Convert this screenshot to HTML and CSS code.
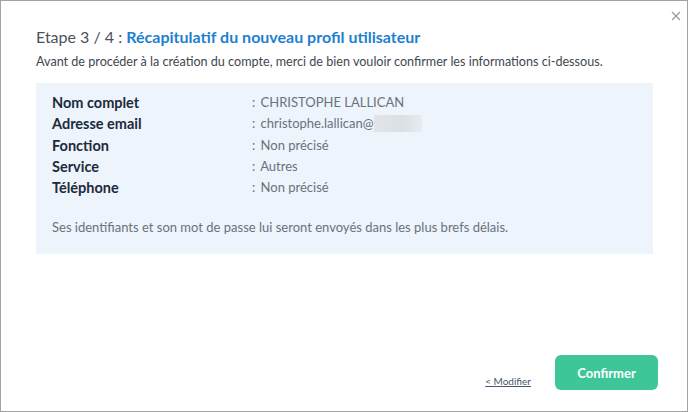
FILE: index.html
```html
<!DOCTYPE html>
<html lang="fr">
<head>
<meta charset="utf-8">
<title>Récapitulatif</title>
<link rel="stylesheet" href="styles.css">
</head>
<body>
<div class="dialog">
  <button class="close" aria-label="Fermer">
    <svg width="10" height="10" viewBox="0 0 10 10"><path d="M1 1L9 9M9 1L1 9" stroke="#9a9a9a" stroke-width="1.2" fill="none"/></svg>
  </button>
  <h1 class="title">Etape 3 / 4 : <strong>Récapitulatif du nouveau profil utilisateur</strong></h1>
  <p class="intro">Avant de procéder à la création du compte, merci de bien vouloir confirmer les informations ci-dessous.</p>
  <div class="summary">
    <dl class="rows">
      <div class="row"><dt>Nom complet</dt><dd><span class="sep">:</span> CHRISTOPHE LALLICAN</dd></div>
      <div class="row"><dt>Adresse email</dt><dd><span class="sep">:</span> christophe.lallican@<span class="masked"></span></dd></div>
      <div class="row"><dt>Fonction</dt><dd><span class="sep">:</span> Non précisé</dd></div>
      <div class="row"><dt>Service</dt><dd><span class="sep">:</span> Autres</dd></div>
      <div class="row"><dt>Téléphone</dt><dd><span class="sep">:</span> Non précisé</dd></div>
    </dl>
    <p class="note">Ses identifiants et son mot de passe lui seront envoyés dans les plus brefs délais.</p>
  </div>
  <div class="footer">
    <a class="back" href="#">&lt; Modifier</a>
    <button class="confirm">Confirmer</button>
  </div>
</div>
</body>
</html>
```

FILE: styles.css
```css
* { box-sizing: border-box; }
html, body { margin: 0; padding: 0; background: #fff; }
body { font-family: Lato, "Open Sans", sans-serif; }

.dialog {
  position: relative;
  width: 688px;
  height: 412px;
  border: 1px solid #a3a3a3;
  padding: 26px 29px 0 35px;
  display: flex;
  flex-direction: column;
}

.close {
  position: absolute;
  top: 9px;
  right: 5px;
  width: 12px;
  height: 12px;
  padding: 0;
  border: 0;
  background: transparent;
  display: flex;
  align-items: center;
  justify-content: center;
}

.title {
  margin: 0;
  font-size: 16px;
  line-height: 20px;
  font-weight: 400;
  color: #4a525c;
}
.title strong { color: #1f7fcf; font-weight: 700; }

.intro {
  margin: 6px 0 0;
  font-size: 12.6px;
  line-height: 18px;
  color: #3f4750;
}

.summary {
  margin: 12px 5px 0 0;
  background: #edf4fb;
  padding: 9px 16px 16px;
  height: 171px;
}

.rows { margin: 0; }
.row {
  display: grid;
  grid-template-columns: 200px 1fr;
  height: 21.25px;
  line-height: 21px;
}
.row dt { font-size: 14.5px; font-weight: 700; color: #1d2a3a; }
.row dd { margin: 0; font-size: 13px; color: #6a727c; }
.sep { margin-right: 2px; }

.masked {
  display: inline-block;
  width: 48px;
  height: 17px;
  vertical-align: -4px;
  background: linear-gradient(90deg, #e1e4e9 0%, #dcdfe4 60%, #e8ebef 100%);
}

.note {
  margin: 19px 0 0;
  font-size: 13px;
  line-height: 21px;
  color: #6a727c;
}

.footer {
  margin-top: auto;
  margin-bottom: 21px;
  display: flex;
  justify-content: flex-end;
  align-items: flex-end;
  gap: 24px;
}

.back {
  font-size: 10px;
  color: #4a5670;
  text-decoration: underline;
  margin-bottom: 3px;
}

.confirm {
  width: 103px;
  height: 35px;
  border: 0;
  border-radius: 6px;
  background: #3ec699;
  color: #fff;
  font-family: Lato, "Open Sans", sans-serif;
  font-size: 13px;
  font-weight: 700;
}
```
